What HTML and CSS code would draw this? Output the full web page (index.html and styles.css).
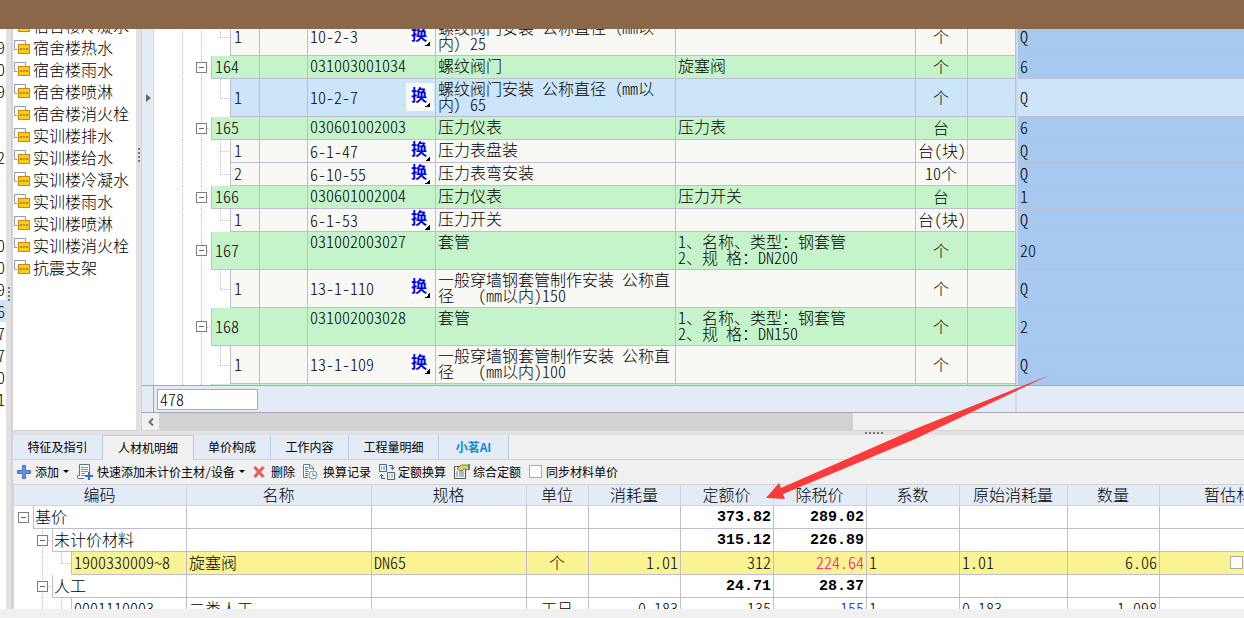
FILE: index.html
```html
<!DOCTYPE html>
<html lang="zh-CN">
<head>
<meta charset="utf-8">
<title>工程计价</title>
<link rel="stylesheet" href="styles.css">
</head>
<body>
<svg class="defs" aria-hidden="true">
  <symbol id="folder" viewBox="0 0 16 14">
    <path d="M3.5 9.5H.5V.5H11.5V4" fill="none" stroke="#8a9bb4"/>
    <rect x="4.500" y="4.500" width="11" height="9" fill="#fad016" stroke="#cf8512"/>
    <path d="M6 8h2v2H6zM9 8h2v2H9zM12 8h2v2h-2z" fill="#c87f14"/>
  </symbol>
</svg>
<header class="topbar"></header>
<div class="workspace">
  <div class="sliver">
    <ul class="rows">
      <li></li><li>9</li><li>0</li><li>9</li><li></li><li></li><li>2</li><li></li><li></li><li></li><li>0</li><li>0</li><li>9</li><li class="current">6</li><li>7</li><li>7</li><li>0</li><li>1</li>
    </ul>
  </div>
  <div class="vsplit outer"><span class="grip"></span></div>
  <main class="content">
    <section class="upper">
      <nav class="projects">
        <ul class="rows">
          <li><svg class="ficon"><use href="#folder"/></svg>宿舍楼冷凝水</li>
          <li><svg class="ficon"><use href="#folder"/></svg>宿舍楼热水</li>
          <li><svg class="ficon"><use href="#folder"/></svg>宿舍楼雨水</li>
          <li><svg class="ficon"><use href="#folder"/></svg>宿舍楼喷淋</li>
          <li><svg class="ficon"><use href="#folder"/></svg>宿舍楼消火栓</li>
          <li><svg class="ficon"><use href="#folder"/></svg>实训楼排水</li>
          <li><svg class="ficon"><use href="#folder"/></svg>实训楼给水</li>
          <li><svg class="ficon"><use href="#folder"/></svg>实训楼冷凝水</li>
          <li><svg class="ficon"><use href="#folder"/></svg>实训楼雨水</li>
          <li><svg class="ficon"><use href="#folder"/></svg>实训楼喷淋</li>
          <li><svg class="ficon"><use href="#folder"/></svg>实训楼消火栓</li>
          <li><svg class="ficon"><use href="#folder"/></svg>抗震支架</li>
        </ul>
      </nav>
      <div class="vsplit inner"><span class="grip"></span></div>
      <div class="sheet">
        <div class="viewport">
          <div class="gutter"><svg class="pointer" viewBox="0 0 5 8"><path d="M0 0L5 4L0 8z" fill="#666"/></svg></div>
          <div class="scrolled">
          <table class="bill">
            <colgroup><col class="c57"><col class="c19"><col class="c29"><col class="c48"><col class="c128"><col class="c240"><col class="c240"><col class="c52"><col class="c48"><col class="c3"><col></colgroup>
            <tbody>
              <tr class="item tall"><td colspan="2" class="branch"></td><td class="no">1</td><td></td><td class="code"><div class="pair">10-2-3<b class="swap">换</b></div></td><td class="name">螺纹阀门安装 公称直径<span class="full">（</span>mm以
内<span class="full">）</span>25</td><td></td><td class="unit">个</td><td></td><td class="freeze"></td><td class="qty">Q</td></tr>
              <tr class="group"><td class="node"><button class="toggle" aria-label="折叠"></button></td><td colspan="2" class="no">164</td><td></td><td class="code">031003001034</td><td class="name">螺纹阀门</td><td class="name">旋塞阀</td><td class="unit">个</td><td></td><td class="freeze"></td><td class="qty">6</td></tr>
              <tr class="item tall selected"><td colspan="2" class="branch"></td><td class="no">1</td><td></td><td class="code"><div class="pair">10-2-7<b class="swap">换</b></div></td><td class="name">螺纹阀门安装 公称直径<span class="full">（</span>mm以
内<span class="full">）</span>65</td><td></td><td class="unit">个</td><td></td><td class="freeze"></td><td class="qty">Q</td></tr>
              <tr class="group"><td class="node"><button class="toggle" aria-label="折叠"></button></td><td colspan="2" class="no">165</td><td></td><td class="code">030601002003</td><td class="name">压力仪表</td><td class="name">压力表</td><td class="unit">台</td><td></td><td class="freeze"></td><td class="qty">6</td></tr>
              <tr class="item"><td colspan="2" class="branch more"></td><td class="no">1</td><td></td><td class="code"><div class="pair">6-1-47<b class="swap">换</b></div></td><td class="name">压力表盘装</td><td></td><td class="unit">台(块)</td><td></td><td class="freeze"></td><td class="qty">Q</td></tr>
              <tr class="item"><td colspan="2" class="branch"></td><td class="no">2</td><td></td><td class="code"><div class="pair">6-10-55<b class="swap">换</b></div></td><td class="name">压力表弯安装</td><td></td><td class="unit">10个</td><td></td><td class="freeze"></td><td class="qty">Q</td></tr>
              <tr class="group"><td class="node"><button class="toggle" aria-label="折叠"></button></td><td colspan="2" class="no">166</td><td></td><td class="code">030601002004</td><td class="name">压力仪表</td><td class="name">压力开关</td><td class="unit">台</td><td></td><td class="freeze"></td><td class="qty">1</td></tr>
              <tr class="item"><td colspan="2" class="branch"></td><td class="no">1</td><td></td><td class="code"><div class="pair">6-1-53<b class="swap">换</b></div></td><td class="name">压力开关</td><td></td><td class="unit">台(块)</td><td></td><td class="freeze"></td><td class="qty">Q</td></tr>
              <tr class="group tall"><td class="node"><button class="toggle" aria-label="折叠"></button></td><td colspan="2" class="no">167</td><td></td><td class="code">031002003027</td><td class="name">套管</td><td class="name">1、名称、类型：钢套管
2、规 格：DN200</td><td class="unit">个</td><td></td><td class="freeze"></td><td class="qty">20</td></tr>
              <tr class="item tall"><td colspan="2" class="branch"></td><td class="no">1</td><td></td><td class="code"><div class="pair">13-1-110<b class="swap">换</b></div></td><td class="name">一般穿墙钢套管制作安装 公称直
径   (mm以内)150</td><td></td><td class="unit">个</td><td></td><td class="freeze"></td><td class="qty">Q</td></tr>
              <tr class="group tall"><td class="node"><button class="toggle" aria-label="折叠"></button></td><td colspan="2" class="no">168</td><td></td><td class="code">031002003028</td><td class="name">套管</td><td class="name">1、名称、类型：钢套管
2、规 格：DN150</td><td class="unit">个</td><td></td><td class="freeze"></td><td class="qty">2</td></tr>
              <tr class="item tall"><td colspan="2" class="branch"></td><td class="no">1</td><td></td><td class="code"><div class="pair">13-1-109<b class="swap">换</b></div></td><td class="name">一般穿墙钢套管制作安装 公称直
径   (mm以内)100</td><td></td><td class="unit">个</td><td></td><td class="freeze"></td><td class="qty">Q</td></tr>
              <tr class="group"><td class="node"></td><td colspan="2" class="no"></td><td></td><td></td><td></td><td></td><td></td><td></td><td class="freeze"></td><td class="qty"></td></tr>
            </tbody>
          </table>
          </div>
        </div>
        <div class="summary"><span class="corner"></span><span class="frozen"><input class="count" aria-label="行数" value="478"></span><span class="rest"></span></div>
        <div class="hscroll"><button class="left" aria-label="向左滚动"><svg viewBox="0 0 6 8"><path d="M5 0.500L1.500 4L5 7.500" fill="none" stroke="#707070" stroke-width="2"/></svg></button><span class="thumb"></span><span class="track"></span></div>
      </div>
    </section>
    <div class="hsplit"><span class="grip"></span></div>
    <section class="lower">
      <div class="tabs" role="tablist">
        <button role="tab" class="w90">特征及指引</button>
        <button role="tab" class="w91 active" aria-selected="true">人材机明细</button>
        <button role="tab" class="w77">单价构成</button>
        <button role="tab" class="w78">工作内容</button>
        <button role="tab" class="w90">工程量明细</button>
        <button role="tab" class="w70 ai full">小茗AI</button>
      </div>
      <div class="toolbar">
        <button class="g-add"><svg width="14" height="14" viewBox="0 0 14 14"><path d="M5.500.5h3v5h5v3h-5v5h-3v-5h-5v-3h5z" fill="#6c90d8" stroke="#4a70c0"/></svg>添加<i class="caret"></i></button>
        <button class="g-fast"><svg width="16" height="16" viewBox="0 0 16 16"><path d="M7 14.500H1.500Q.5 14.500.5 13.500V11.500H2.500V.5H12.500V9" fill="#fff" stroke="#5c7492"/><path d="M4 3.500h7M4 5.500h7M4 7.500h7M4 9.500h4M4 11.500h4" stroke="#8296af"/><path d="M11 8h2v3h3v2h-3v3h-2v-3H8v-2h3z" fill="#2f6fd6"/></svg>快速添加未计价主材/设备<i class="caret"></i></button>
        <button class="g-del"><svg width="12" height="12" viewBox="0 0 12 12"><path d="M1.500 1L10.500 11M10.500 1L1.500 11" stroke="#e0605c" stroke-width="3"/></svg>删除</button>
        <button class="g-log"><svg width="15" height="16" viewBox="0 0 15 16"><path d="M5 13.500H.5V.5H7L10.500 4V6" fill="#fff" stroke="#5c7f9c"/><path d="M6.500.5V4.500H10.500M2 3.500h3M2 5.500h3M2 7.500h4M2 9.500h3M2 11.500h3" fill="none" stroke="#5c7f9c"/><circle cx="10" cy="11" r="4" fill="#fff" stroke="#6f93b4"/><path d="M10 8.500V11.500H12.500" fill="none" stroke="#43749c"/></svg>换算记录</button>
        <button class="g-conv"><svg width="16" height="16" viewBox="0 0 16 16"><path d="M.5.5h7v7h-7zM8.500 8.500h7v7h-7z" fill="#fff" stroke="#2e67c8"/><path d="M2 3h1M4 3h2M2 5h1M4 5h2" stroke="#2e67c8"/><path d="M10 11h1M12 11h2M10 13h1M12 13h2" stroke="#d65a2c"/><path d="M10 1.500h3.500V5M11.500 3.500l2 2 2-2M6 14.500H2.500V11M.5 12.500l2-2 2 2" fill="none" stroke="#3c5573"/></svg>定额换算</button>
        <button class="g-comp"><svg width="16" height="15" viewBox="0 0 16 15"><path d="M.5 2.500h11v12H.5z" fill="#fff" stroke="#4e535b"/><path d="M2 8h2M5 8h5M2 10h2M5 10h5M2 12h2M5 12h5" stroke="#50799b"/><path d="M3 5L7 1h6l2 1v3l-3 1-2-1-2 2-1-1-1 1z" fill="#e0cf62" stroke="#77642d" stroke-width=".8"/><path d="M14 0h2v6h-2z" fill="#4d9b57"/></svg>综合定额</button>
        <label class="sync"><input type="checkbox" class="box">同步材料单价</label>
      </div>
      <div class="detailwrap">
        <table class="detail">
          <colgroup><col class="c19"><col class="c19"><col class="c19"><col class="c115"><col class="c185"><col class="c155"><col class="c62"><col class="c92"><col class="c93"><col class="c93"><col class="c93"><col class="c108"><col class="c92"><col class="c154"></colgroup>
          <thead><tr><th colspan="4">编码</th><th>名称</th><th>规格</th><th>单位</th><th>消耗量</th><th>定额价</th><th>除税价</th><th>系数</th><th>原始消耗量</th><th>数量</th><th>暂估材料</th></tr></thead>
          <tbody>
            <tr><td class="n0"><button class="toggle" aria-label="折叠"></button></td><td colspan="3" class="label">基价</td><td></td><td></td><td></td><td></td><td class="sum">373.82</td><td class="sum">289.02</td><td></td><td></td><td></td><td></td></tr>
            <tr><td colspan="2" class="n1"><button class="toggle" aria-label="折叠"></button></td><td colspan="2" class="label">未计价材料</td><td></td><td></td><td></td><td></td><td class="sum">315.12</td><td class="sum">226.89</td><td></td><td></td><td></td><td></td></tr>
            <tr class="mark"><td colspan="3" class="n2"></td><td class="label">1900330009~8</td><td>旋塞阀</td><td>DN65</td><td class="mid">个</td><td class="num">1.01</td><td class="num">312</td><td class="num pink">224.64</td><td>1</td><td>1.01</td><td class="num">6.06</td><td class="mid"><input type="checkbox" class="box" aria-label="暂估材料"></td></tr>
            <tr><td colspan="2" class="n1"><button class="toggle" aria-label="折叠"></button></td><td colspan="2" class="label">人工</td><td></td><td></td><td></td><td></td><td class="sum">24.71</td><td class="sum">28.37</td><td></td><td></td><td></td><td></td></tr>
            <tr><td colspan="3" class="n2"></td><td class="label">0001110003</td><td>二类人工</td><td></td><td class="mid">工日</td><td class="num">0.183</td><td class="num">135</td><td class="num blue">155</td><td>1</td><td>0.183</td><td class="num">1.098</td><td></td></tr>
          </tbody>
        </table>
      </div>
    </section>
  </main>
</div>
<footer class="bottombar"></footer>
<svg class="arrow" viewBox="0 0 286 124"><path d="M1 123L14 108L16 113L150 54L285 0L150 64L18 119L20 124z" fill="#fb3a3a"/></svg>
</body>
</html>
```
FILE: styles.css
```css
:root {
  --line: #c0bdd3;
  --pale: #e3ebf7;
  --grey: #f0f0f0;
  --edge: #d4d4d4;
}
* { box-sizing: border-box; }
body {
  margin: 0;
  height: 100vh;
  display: flex;
  flex-direction: column;
  overflow: hidden;
  background: var(--grey);
  color: #000;
  font: 16px/16px "Noto Sans CJK SC", sans-serif;
  font-weight: 300;
  font-feature-settings: "hwid";
}
button, input { font: inherit; color: inherit; margin: 0; padding: 0; }
ul { margin: 0; padding: 0; list-style: none; }
.defs { display: none; }
.full { font-feature-settings: normal; }
.topbar { flex: none; height: 29px; background: #8a6748; }
.bottombar { flex: none; height: 9px; background: var(--grey); }
.workspace { flex: 1; min-height: 0; display: flex; }
.rows { margin-top: -15px; }
.rows li { height: 22px; display: flex; align-items: center; padding-bottom: 1px; white-space: nowrap; }

.sliver { flex: none; width: 6px; overflow: hidden; background: #fff; }
.sliver li { justify-content: flex-end; padding-right: 1px; }
.sliver .current { background: #cce5f8; }

.vsplit { flex: none; display: flex; align-items: center; justify-content: center; background: #e1e1e1; border-right: 2px solid var(--edge); }
.outer { width: 7px; }
.inner { width: 6px; border-right-width: 1px; align-items: flex-start; padding-top: 119px; }
.vsplit .grip { width: 2px; height: 14px; background: repeating-linear-gradient(#777 0 2px, transparent 2px 4px); }
.outer .grip { margin-bottom: 50px; }
.hsplit { flex: none; height: 5px; background: #e1e1e1; border-top: 1px solid var(--edge); display: flex; justify-content: center; align-items: center; padding-left: 490px; }
.hsplit .grip { width: 18px; height: 2px; background: repeating-linear-gradient(90deg, #777 0 2px, transparent 2px 4px); }

.content { flex: 1; min-width: 0; display: flex; flex-direction: column; }
.upper { flex: 401 1 0; min-height: 0; display: flex; }
.projects { flex: none; width: 123px; background: #fff; overflow: hidden; }
.projects li { gap: 3px; padding-left: 1px; }
.ficon { flex: none; width: 16px; height: 14px; }

.sheet { flex: 1; min-width: 0; display: flex; flex-direction: column; }
.viewport { flex: 1; min-height: 0; display: flex; overflow: hidden; background: #fff; }
.gutter { flex: none; width: 12px; background: var(--pale); border-right: 1px solid #d0d3e8; padding: 65px 0 0 4px; }
.pointer { display: block; width: 5px; height: 8px; }
.scrolled { flex: 1; min-width: 0; }
.bill { margin-top: -11px; }
table { width: 100%; table-layout: fixed; border-collapse: separate; border-spacing: 0; }
td { height: 23px; padding: 0 2px 2px; border-left: 1px solid var(--line); border-bottom: 1px solid var(--line); white-space: pre; overflow: hidden; }
.tall td { height: 38px; }
.c3 { width: 3px; } .c19 { width: 19px; } .c29 { width: 29px; } .c48 { width: 48px; } .c52 { width: 52px; }
.c57 { width: 57px; } .c62 { width: 62px; } .c92 { width: 92px; } .c93 { width: 93px; } .c108 { width: 108px; }
.c115 { width: 115px; } .c128 { width: 128px; } .c154 { width: 154px; } .c155 { width: 155px; } .c185 { width: 185px; } .c240 { width: 240px; }
.item td { background-color: #f8f9f5; }
.group td { background-color: #c6f4ca; }
.selected td { background-color: #cce5f8; }
.group .code, .name { vertical-align: top; padding-top: 1px; }
.no { padding-left: 3px; }
.unit, .mid { text-align: center; padding-right: 3px; }
.bill .node, .bill .branch {
  border: 0;
  background-color: #fff;
  --v: repeating-linear-gradient(var(--line) 0 1px, transparent 1px 2px);
  --h: repeating-linear-gradient(90deg, var(--line) 0 1px, transparent 1px 2px);
  background-repeat: no-repeat;
}
.bill .node { padding: 0 0 0 42px; background-image: var(--v), var(--v), var(--h); background-size: 1px 100%, 1px 100%, 4px 1px; background-position: 28px 0, 47px 0, 53px 11px; }
.bill .branch { background-image: var(--v), var(--v), var(--v), var(--h); background-size: 1px 100%, 1px 100%, 1px 50%, 10px 1px; background-position: 28px 0, 47px 0, 66px 0, 66px 50%; }
.bill .more { background-size: 1px 100%, 1px 100%, 1px 100%, 10px 1px; }
.bill .tall .node, .bill .tall.group .node { background-position: 28px 0, 47px 0, 53px 50%; padding-bottom: 1px; }
.toggle { display: block; width: 11px; height: 11px; border: 1px solid #7d7d7d; background: linear-gradient(#666, #666) 2px 4px / 5px 1px no-repeat #fff; }
.pair { display: flex; align-items: center; justify-content: space-between; line-height: 14px; }
.swap {
  width: 20px; height: 20px; margin-right: 3px; padding: 0 1px;
  color: #00e; font-weight: 700;
  background: linear-gradient(135deg, transparent 50%, #000 50%) 100% 100% / 5px 5px no-repeat #fff;
}
.item .code { padding-bottom: 1px; }
.selected .swap { box-shadow: 0 0 0 4px #f8f9f5; }
.selected .pair { padding: 4px 0; }
.bill .freeze { padding: 0; background-color: #d3d5e9; border-bottom: 0; }
.bill .qty { background-color: #a7c9ef; border-left: 0; }
.bill .selected .qty { background-color: #cce5f8; }

.summary { flex: none; height: 28px; display: flex; background: var(--pale); border-top: 1px solid #a9a9ad; border-bottom: 1px solid #a9a9ad; }
.corner { width: 12px; border-right: 1px solid #a9a9ad; }
.frozen { width: 863px; padding: 3px; border-right: 2px solid #d3d5e9; }
.count { display: block; width: 101px; height: 21px; padding: 0 0 2px 2px; border: 1px solid #a9a9ad; background: #fff; }
.hscroll { flex: none; height: 17px; display: flex; background: var(--grey); }
.left { width: 17px; border: 0; background: var(--grey); display: flex; align-items: center; justify-content: center; }
.left svg { width: 6px; height: 8px; }
.thumb { flex: 694 1 0; background: #d0d2d3; }
.track { flex: 391 1 0; }

.lower { flex: 174 1 0; min-height: 0; display: flex; flex-direction: column; overflow: hidden; }
.tabs { flex: none; height: 25px; display: flex; border-bottom: 1px solid var(--edge); font-size: 12px; }
.tabs button { border: 0; border-right: 1px solid #b3cfeb; background: var(--pale); font-weight: 400; }
.tabs .active { background: var(--grey); border-top: 1px solid #b3cfeb; margin-bottom: -1px; }
.tabs .ai { color: #088ed8; font-weight: 700; }
.w70 { width: 70px; } .w77 { width: 77px; } .w78 { width: 78px; } .w90 { width: 90px; } .w91 { width: 91px; }
.toolbar { flex: none; height: 24px; display: flex; align-items: center; gap: 8px; padding: 0 0 1px 4px; font-size: 12px; font-weight: 400; }
.toolbar button, .sync { display: flex; align-items: center; gap: 4px; border: 0; background: none; white-space: nowrap; }
.toolbar svg { flex: none; }
.caret { border: 3px solid transparent; border-top-color: #000; border-bottom: 0; }
.toolbar .g-del { gap: 6px; }
.toolbar .g-log { gap: 5px; }
.toolbar .g-conv, .toolbar .g-comp { gap: 3px; }
.box { appearance: none; width: 13px; height: 13px; border: 1px solid #aaa; background: #fff; }

.detailwrap { flex: 1; min-height: 0; overflow: hidden; background: #fff; border-left: 1px solid var(--edge); border-top: 1px solid var(--edge); }
.detail { min-width: 1299px; }
.detail th { height: 21px; padding: 0 1px 2px 0; background: var(--pale); border-left: 1px solid #d0d3e8; border-bottom: 1px solid #d0d3e8; font-weight: 300; }
.detail th:first-child { border-left: 0; }
.detail .label { padding-left: 1px; }
.detail .n0, .detail .n1, .detail .n2 { border: 0; padding: 0 0 0 4px; background-color: #fff; background-repeat: no-repeat;
  --v: repeating-linear-gradient(var(--line) 0 1px, transparent 1px 2px);
  --h: repeating-linear-gradient(90deg, var(--line) 0 1px, transparent 1px 2px);
}
.detail .n1 { padding-left: 23px; background-image: var(--v), var(--h); background-size: 1px 100%, 4px 1px; background-position: 28px 0, 34px 11px; }
.detail .n2 { background-image: var(--v), var(--v), var(--h); background-size: 1px 100%, 1px 11px, 9px 1px; background-position: 28px 0, 47px 0, 47px 11px; }
.detail .n2 + .label { padding-left: 2px; }
.mark td { background-color: #faf393; }
.num, .sum { text-align: right; }
.sum { font-family: "Liberation Mono", monospace; font-size: 15px; font-weight: 700; padding: 2px 2px 0; }
.pink { color: #ff0080; }
.blue { color: #00f; }
td .box { display: block; margin: 0 auto; }
.arrow { position: absolute; left: 765px; top: 375px; width: 286px; height: 124px; pointer-events: none; }
```
